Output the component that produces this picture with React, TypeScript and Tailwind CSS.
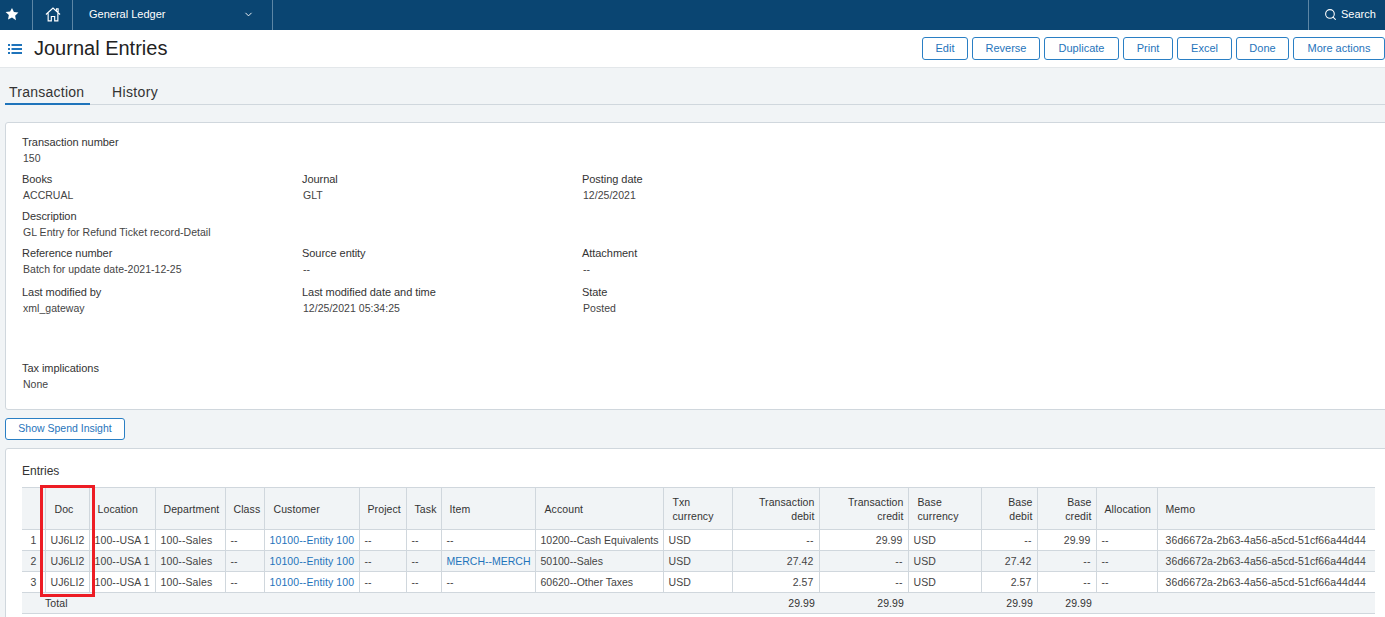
import React from "react";
import { ChevronDown, Search } from "lucide-react";

const font = "font-['Liberation_Sans',Arial,sans-serif]";

function Field({ label, value, className = "" }: { label: string; value: string; className?: string }) {
  return (
    <div className={className}>
      <div className="h-4 leading-4 text-[11px] text-[#333] tracking-[-0.05px]">{label}</div>
      <div className="h-4 leading-4 text-[10.5px] text-[#444] pl-px tracking-[0.03px]">{value}</div>
    </div>
  );
}

const widths = [23, 44, 66, 70, 39, 95, 47, 35, 94, 128, 69, 87, 89, 73, 56, 59, 61, 218];

type Cell = { t: string; link?: boolean };
const c = (t: string, link = false): Cell => ({ t, link });

const headers: { t: string[]; right?: boolean; pl: string }[] = [
  { t: [""], pl: "" },
  { t: ["Doc"], pl: "pl-[9px]" },
  { t: ["Location"], pl: "pl-[8px]" },
  { t: ["Department"], pl: "pl-[8px]" },
  { t: ["Class"], pl: "pl-[8px]" },
  { t: ["Customer"], pl: "pl-[9px]" },
  { t: ["Project"], pl: "pl-[8px]" },
  { t: ["Task"], pl: "pl-[8px]" },
  { t: ["Item"], pl: "pl-[8px]" },
  { t: ["Account"], pl: "pl-[9px]" },
  { t: ["Txn", "currency"], pl: "pl-[9px]" },
  { t: ["Transaction", "debit"], right: true, pl: "pr-1" },
  { t: ["Transaction", "credit"], right: true, pl: "pr-1" },
  { t: ["Base", "currency"], pl: "pl-[9px]" },
  { t: ["Base", "debit"], right: true, pl: "pr-1" },
  { t: ["Base", "credit"], right: true, pl: "pr-1" },
  { t: ["Allocation"], pl: "pl-[8px]" },
  { t: ["Memo"], pl: "pl-[8px]" },
];

const memo = "36d6672a-2b63-4a56-a5cd-51cf66a44d44";
const rows: Cell[][] = [
  [c("1"), c("UJ6LI2"), c("100--USA 1"), c("100--Sales"), c("--"), c("10100--Entity 100", true), c("--"), c("--"), c("--"), c("10200--Cash Equivalents"), c("USD"), c("--"), c("29.99"), c("USD"), c("--"), c("29.99"), c("--"), c(memo)],
  [c("2"), c("UJ6LI2"), c("100--USA 1"), c("100--Sales"), c("--"), c("10100--Entity 100", true), c("--"), c("--"), c("MERCH--MERCH", true), c("50100--Sales"), c("USD"), c("27.42"), c("--"), c("USD"), c("27.42"), c("--"), c("--"), c(memo)],
  [c("3"), c("UJ6LI2"), c("100--USA 1"), c("100--Sales"), c("--"), c("10100--Entity 100", true), c("--"), c("--"), c("--"), c("60620--Other Taxes"), c("USD"), c("2.57"), c("--"), c("USD"), c("2.57"), c("--"), c("--"), c(memo)],
];
const rightCols = new Set([11, 12, 14, 15]);
const cellPad = [
  "pr-[8px] text-right",
  "pl-[5px]",
  "pl-[5px]",
  "pl-[5px]",
  "pl-[5px]",
  "pl-[5px]",
  "pl-[5px]",
  "pl-[5px]",
  "pl-[5px] tracking-normal",
  "pl-[5px] tracking-normal",
  "pl-[5px]",
  "pr-[5px]",
  "pr-[5px]",
  "pl-[5px]",
  "pr-[5px]",
  "pr-[5px]",
  "pl-[5px]",
  "pl-[8px]",
];
const totals: Record<number, string> = { 11: "29.99", 12: "29.99", 14: "29.99", 15: "29.99" };

function Btn({ label, w }: { label: string; w: string }) {
  return (
    <button className={`h-[23px] ${w} shrink-0 rounded-[3px] border border-[#2a7fc4] bg-white text-[11px] text-[#1f74bb] whitespace-nowrap flex items-center justify-center`}>
      {label}
    </button>
  );
}

export default function App() {
  return (
    <div className={`${font} w-[1385px] h-[617px] overflow-hidden bg-[#f1f4f6] text-[#333]`}>
      <header className="h-[30px] bg-[#0a4572] flex text-white text-[11px]">
        <div className="w-[33px] border-r border-[#5d86a5] flex items-center pl-[5px] pb-[2px]">
          <svg width="14" height="14" viewBox="0 0 24 24" fill="#fff"><path d="M12 1.5l3.3 7 7.7 1-5.6 5.3 1.4 7.7L12 18l-6.8 3.5 1.4-7.7L1 8.5l7.7-1z" /></svg>
        </div>
        <div className="w-[40px] border-r border-[#5d86a5] flex items-center justify-center pb-[2px]">
          <svg width="16" height="15" viewBox="0 0 18 17" fill="none" stroke="#fff" strokeWidth="1.3"><path d="M1 8.5L9 1.2l8 7.3M3.5 7v8.8h3.6v-5h3.8v5h3.6V7M13 4V2h1.8v3.6" /></svg>
        </div>
        <div className="w-[200px] border-r border-[#5d86a5] flex items-center pl-4 pr-[18px] pb-[2px] justify-between">
          <span>General Ledger</span>
          <ChevronDown size={11} strokeWidth={2} />
        </div>
        <div className="ml-auto w-[77px] border-l border-[#5d86a5] flex items-center pl-[15px] pb-[2px] gap-[4px]">
          <Search size={13} strokeWidth={2} />
          <span>Search</span>
        </div>
      </header>

      <div className="h-[38px] bg-white border-b border-[#e3e7ea] flex items-center">
        <svg className="ml-[8px]" width="14" height="12" viewBox="0 0 14 12" fill="#1f74bb"><rect x="0" y="1" width="2" height="2" /><rect x="0" y="5" width="2" height="2" /><rect x="0" y="9" width="2" height="2" /><rect x="3.5" y="1" width="10.5" height="2" /><rect x="3.5" y="5" width="10.5" height="2" /><rect x="3.5" y="9" width="10.5" height="2" /></svg>
        <h1 className="ml-[12px] pb-[2px] text-[20px] text-[#222] font-normal">Journal Entries</h1>
        <div className="ml-auto flex gap-1">
          <Btn label="Edit" w="w-[46px]" />
          <Btn label="Reverse" w="w-[68px]" />
          <Btn label="Duplicate" w="w-[75px]" />
          <Btn label="Print" w="w-[50px]" />
          <Btn label="Excel" w="w-[55px]" />
          <Btn label="Done" w="w-[53px]" />
          <Btn label="More actions" w="w-[92px]" />
        </div>
      </div>

      <nav className="mt-[1px] ml-[5px] h-[36px] flex items-end border-b border-[#d0d7dd] text-[14px] text-[#333]">
        <div className="w-[85px] h-[24px] pl-[4px] border-b-2 border-[#1f74bb] -mb-px leading-[22px] tracking-[0.25px]">Transaction</div>
        <div className="ml-[22px] h-[24px] leading-[24px] tracking-[0.35px]">History</div>
      </nav>

      <section className="mt-[17px] ml-[5px] w-[1400px] h-[288px] bg-white border border-[#d0d7dd] rounded-[3px] pl-[16px] pt-[11px]">
        <Field label="Transaction number" value="150" className="mb-[5px]" />
        <div className="grid grid-cols-[280px_280px_280px] mb-[5px]">
          <Field label="Books" value="ACCRUAL" />
          <Field label="Journal" value="GLT" />
          <Field label="Posting date" value="12/25/2021" />
        </div>
        <Field label="Description" value="GL Entry for Refund Ticket record-Detail" className="mb-[5px]" />
        <div className="grid grid-cols-[280px_280px_280px] mb-[7px]">
          <Field label="Reference number" value="Batch for update date-2021-12-25" />
          <Field label="Source entity" value="--" />
          <Field label="Attachment" value="--" />
        </div>
        <div className="grid grid-cols-[280px_280px_280px] mb-[44px]">
          <Field label="Last modified by" value="xml_gateway" />
          <Field label="Last modified date and time" value="12/25/2021 05:34:25" />
          <Field label="State" value="Posted" />
        </div>
        <Field label="Tax implications" value="None" />
      </section>

      <button className="block mt-[8px] ml-[5px] w-[120px] h-[22px] rounded-[3px] border border-[#2a7fc4] bg-white text-[10.5px] text-[#1f74bb]">
        Show Spend Insight
      </button>

      <section className="mt-[8px] ml-[5px] w-[1400px] h-[200px] bg-white border border-[#d0d7dd] rounded-[3px] pl-[16px] pt-[14px]">
        <h2 className="text-[12px] leading-[16px] text-[#333] font-normal">Entries</h2>
        <div className="relative mt-[8px] w-[1354px]">
          <table className="border-collapse table-fixed w-[1353px] text-[10.5px] tracking-[0.1px]">
            <colgroup>
              {widths.map((w, i) => (
                <col key={i} style={{ width: w }} />
              ))}
            </colgroup>
            <thead>
              <tr className="h-[42px] bg-[#f1f4f6] border-y border-[#d0d7dd]">
                {headers.map((h, i) => (
                  <th key={i} className={`border-l border-[#d0d7dd] first:border-l-0 font-normal text-[#333] p-0 leading-[14px] ${h.right ? "text-right" : "text-left"} ${h.pl}`}>
                    {h.t.map((l, j) => (
                      <div key={j}>{l}</div>
                    ))}
                  </th>
                ))}
              </tr>
            </thead>
            <tbody>
              {rows.map((r, ri) => (
                <tr key={ri} className={`h-[21px] border-b border-[#d0d7dd] ${ri === 1 ? "bg-[#f1f4f6]" : "bg-white"}`}>
                  {r.map((cell, i) => (
                    <td key={i} className={`border-l border-[#d0d7dd] first:border-l-0 p-0 pt-px whitespace-nowrap overflow-hidden ${rightCols.has(i) ? "text-right" : ""} ${cellPad[i]} ${cell.link ? "text-[#1f74bb]" : "text-[#444]"}`}>
                      {cell.t}
                    </td>
                  ))}
                </tr>
              ))}
              <tr className="h-[21px] border-b border-[#d0d7dd] bg-[#f1f4f6] text-[#333]">
                <td className="p-0" />
                <td className="p-0 pt-px whitespace-nowrap" colSpan={2}>Total</td>
                {widths.slice(3).map((_, k) => {
                  const i = k + 3;
                  return (
                    <td key={i} className={`p-0 pt-px text-right ${totals[i] ? "pr-1" : ""}`}>
                      {totals[i] ?? ""}
                    </td>
                  );
                })}
              </tr>
            </tbody>
          </table>
          <div className="absolute left-[18px] top-[-2px] w-[55px] h-[112px] border-[3px] border-[#ed1c24]" />
        </div>
      </section>
    </div>
  );
}
